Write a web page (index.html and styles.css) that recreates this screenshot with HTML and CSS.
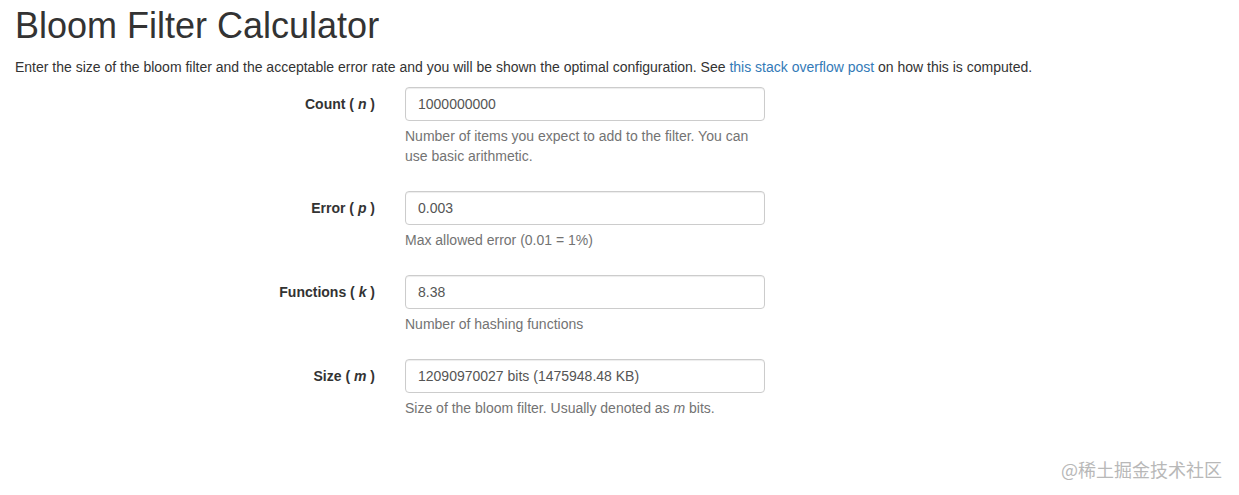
FILE: index.html
```html
<!DOCTYPE html>
<html lang="en">
<head>
<meta charset="utf-8">
<title>Bloom Filter Calculator</title>
<link rel="stylesheet" href="styles.css">
</head>
<body>
<div class="container">
  <h1 class="title">Bloom Filter Calculator</h1>
  <p class="intro">Enter the size of the bloom filter and the acceptable error rate and you will be shown the optimal configuration. See <a href="#" class="link">this stack overflow post</a> on how this is computed.</p>
  <form class="form">
    <div class="form-group">
      <label class="form-label">Count ( <i>n</i> )</label>
      <div class="form-field">
        <input class="form-control" type="text" value="1000000000">
        <span class="help-block">Number of items you expect to add to the filter. You can use basic arithmetic.</span>
      </div>
    </div>
    <div class="form-group">
      <label class="form-label">Error ( <i>p</i> )</label>
      <div class="form-field">
        <input class="form-control" type="text" value="0.003">
        <span class="help-block">Max allowed error (0.01 = 1%)</span>
      </div>
    </div>
    <div class="form-group">
      <label class="form-label">Functions ( <i>k</i> )</label>
      <div class="form-field">
        <input class="form-control" type="text" value="8.38">
        <span class="help-block">Number of hashing functions</span>
      </div>
    </div>
    <div class="form-group">
      <label class="form-label">Size ( <i>m</i> )</label>
      <div class="form-field">
        <input class="form-control" type="text" value="12090970027 bits (1475948.48 KB)">
        <span class="help-block">Size of the bloom filter. Usually denoted as <i>m</i> bits.</span>
      </div>
    </div>
  </form>
</div>
<div class="watermark">@稀土掘金技术社区</div>
</body>
</html>
```
FILE: styles.css
```css
html, body {
  margin: 0;
  padding: 0;
  background: #fff;
}
body {
  font-family: "Liberation Sans", Arial, Helvetica, sans-serif;
  font-size: 14px;
  line-height: 20px;
  color: #333;
  min-height: 495px;
  position: relative;
}
.container {
  padding: 6px 15px 0 15px;
}
.title {
  margin: 0 0 11px 0;
  font-size: 36px;
  line-height: 39.6px;
  font-weight: 500;
  color: #333;
}
.intro {
  margin: 0 0 10px 0;
}
.link {
  color: #337ab7;
  text-decoration: none;
}
.form-group {
  display: flex;
  align-items: flex-start;
  margin-bottom: 15px;
}
.form-label {
  width: 360px;
  padding: 7px 15px 0 0;
  text-align: right;
  font-weight: bold;
  box-sizing: content-box;
  flex: none;
}
.form-field {
  width: 360px;
  padding-left: 15px;
  display: flex;
  flex-direction: column;
}
.form-control {
  display: block;
  width: 360px;
  height: 34px;
  box-sizing: border-box;
  padding: 6px 12px;
  font-family: inherit;
  font-size: 14px;
  line-height: 20px;
  color: #555;
  background: #fff;
  border: 1px solid #ccc;
  border-radius: 4px;
  box-shadow: inset 0 1px 1px rgba(0,0,0,.075);
  margin: 0;
}
.help-block {
  display: block;
  margin: 5px 0 10px 0;
  color: #737373;
}
.watermark {
  position: absolute;
  right: 17px;
  bottom: 16px;
  font-family: "Noto Sans CJK SC", "Liberation Sans", sans-serif;
  font-size: 18px;
  line-height: 20px;
  color: #b8b8b8;
}
```
